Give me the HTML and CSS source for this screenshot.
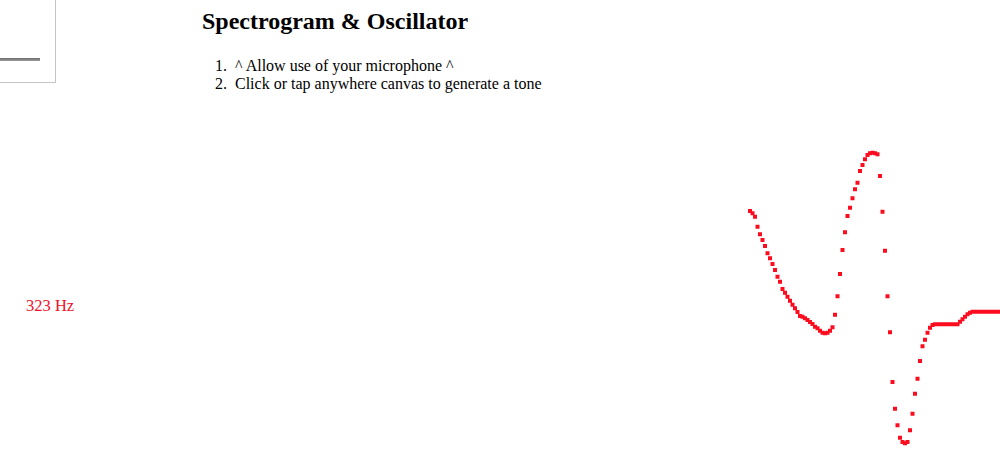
FILE: index.html
```html
<!DOCTYPE html>
<html>
<head>
<meta charset="utf-8">
<title>Spectrogram &amp; Oscillator</title>
<link rel="stylesheet" href="styles.css">
</head>
<body>
<svg class="scope" width="1000" height="462" viewBox="0 0 1000 462" xmlns="http://www.w3.org/2000/svg">
  <text class="hz" x="26" y="311">323 Hz</text>
  <path class="wave" d="M748 209h4v4h-4z M750.5 211.3h4v4h-4z M753 214.7h4v4h-4z M755.5 224.7h4v4h-4z M758 232.3h4v4h-4z M760.5 238h4v4h-4z M763 244h4v4h-4z M765.5 251.3h4v4h-4z M768 256.3h4v4h-4z M770.5 262h4v4h-4z M773 268h4v4h-4z M775.5 274.7h4v4h-4z M778 279.7h4v4h-4z M780.5 287h4v4h-4z M783 290.7h4v4h-4z M785.5 294.7h4v4h-4z M788 298.7h4v4h-4z M790.5 302.7h4v4h-4z M793 306.3h4v4h-4z M795.5 310h4v4h-4z M798 314h4v4h-4z M800.5 314.7h4v4h-4z M803 316.3h4v4h-4z M805.5 318h4v4h-4z M808 320h4v4h-4z M810.5 322h4v4h-4z M813 324.7h4v4h-4z M815.5 326.3h4v4h-4z M818 328.7h4v4h-4z M820.5 330.7h4v4h-4z M823 331.3h4v4h-4z M825.5 330.7h4v4h-4z M828 328.7h4v4h-4z M830.5 325.3h4v4h-4z M833 312.7h4v4h-4z M835.5 294.3h4v4h-4z M838 272h4v4h-4z M840.5 248h4v4h-4z M843 230.3h4v4h-4z M845.5 214h4v4h-4z M848 205.7h4v4h-4z M850.5 196.3h4v4h-4z M853 187.3h4v4h-4z M855.5 180.7h4v4h-4z M858 169h4v4h-4z M860.5 163h4v4h-4z M863 157.3h4v4h-4z M865.5 153h4v4h-4z M868 151.3h4v4h-4z M870.5 150.7h4v4h-4z M873 151.3h4v4h-4z M875.5 152.3h4v4h-4z M878 174h4v4h-4z M880.5 209.7h4v4h-4z M883 248.7h4v4h-4z M885.5 294.3h4v4h-4z M888 330.3h4v4h-4z M890.5 380h4v4h-4z M893 406.7h4v4h-4z M895.5 423.3h4v4h-4z M898 435.7h4v4h-4z M900.5 440h4v4h-4z M903 441.3h4v4h-4z M905.5 440h4v4h-4z M908 428.3h4v4h-4z M910.5 411.7h4v4h-4z M913 391.7h4v4h-4z M915.5 376.7h4v4h-4z M918 359h4v4h-4z M920.5 344.3h4v4h-4z M923 337.7h4v4h-4z M925.5 330.7h4v4h-4z M928 325.7h4v4h-4z M930.5 323h4v4h-4z M933 322.3h4v4h-4z M935.5 322.3h4v4h-4z M938 322.3h4v4h-4z M940.5 322.3h4v4h-4z M943 322.3h4v4h-4z M945.5 322.3h4v4h-4z M948 322.3h4v4h-4z M950.5 322.3h4v4h-4z M953 322.3h4v4h-4z M955.5 322.3h4v4h-4z M958 319.7h4v4h-4z M960.5 317.3h4v4h-4z M963 314.7h4v4h-4z M965.5 312.3h4v4h-4z M968 310.7h4v4h-4z M970.5 309.7h4v4h-4z M973 309.7h27v4h-27z"/>
</svg>
<div class="top">
  <div class="control"><div class="bar"></div></div>
  <div class="intro">
    <h2 class="title">Spectrogram &amp; Oscillator</h2>
    <ol class="steps">
      <li>^ Allow use of your microphone ^</li>
      <li>Click or tap anywhere canvas to generate a tone</li>
    </ol>
  </div>
</div>
</body>
</html>
```
FILE: styles.css
```css
html, body {
  margin: 0;
  padding: 0;
  background: #ffffff;
}
body {
  width: 1000px;
  height: 462px;
  overflow: hidden;
  position: relative;
  font-family: "Liberation Serif", "Times New Roman", serif;
  color: #000;
}
.scope {
  position: absolute;
  left: 0;
  top: 0;
}
.wave {
  fill: #fb0d1f;
}
.hz {
  font-family: "Liberation Serif", "Times New Roman", serif;
  font-size: 16.5px;
  fill: #f0102a;
}
.top {
  position: relative;
  display: flex;
  align-items: flex-start;
}
.control {
  width: 55px;
  height: 24px;
  padding-top: 58px;
  border-right: 1px solid #c4c4c4;
  border-bottom: 1px solid #c4c4c4;
}
.bar {
  width: 40px;
  height: 3px;
  background: linear-gradient(#6c6c6c, #9c9c9c);
}
.intro {
  margin-left: 146px;
}
.title {
  font-size: 24px;
  font-weight: bold;
  margin: 8px 0 22px 0;
  line-height: normal;
}
.steps {
  margin: 0;
  padding-left: 33px;
  font-size: 16px;
  line-height: 18px;
}
.steps li::marker {
  content: counter(list-item) ".\2002";
}
```
